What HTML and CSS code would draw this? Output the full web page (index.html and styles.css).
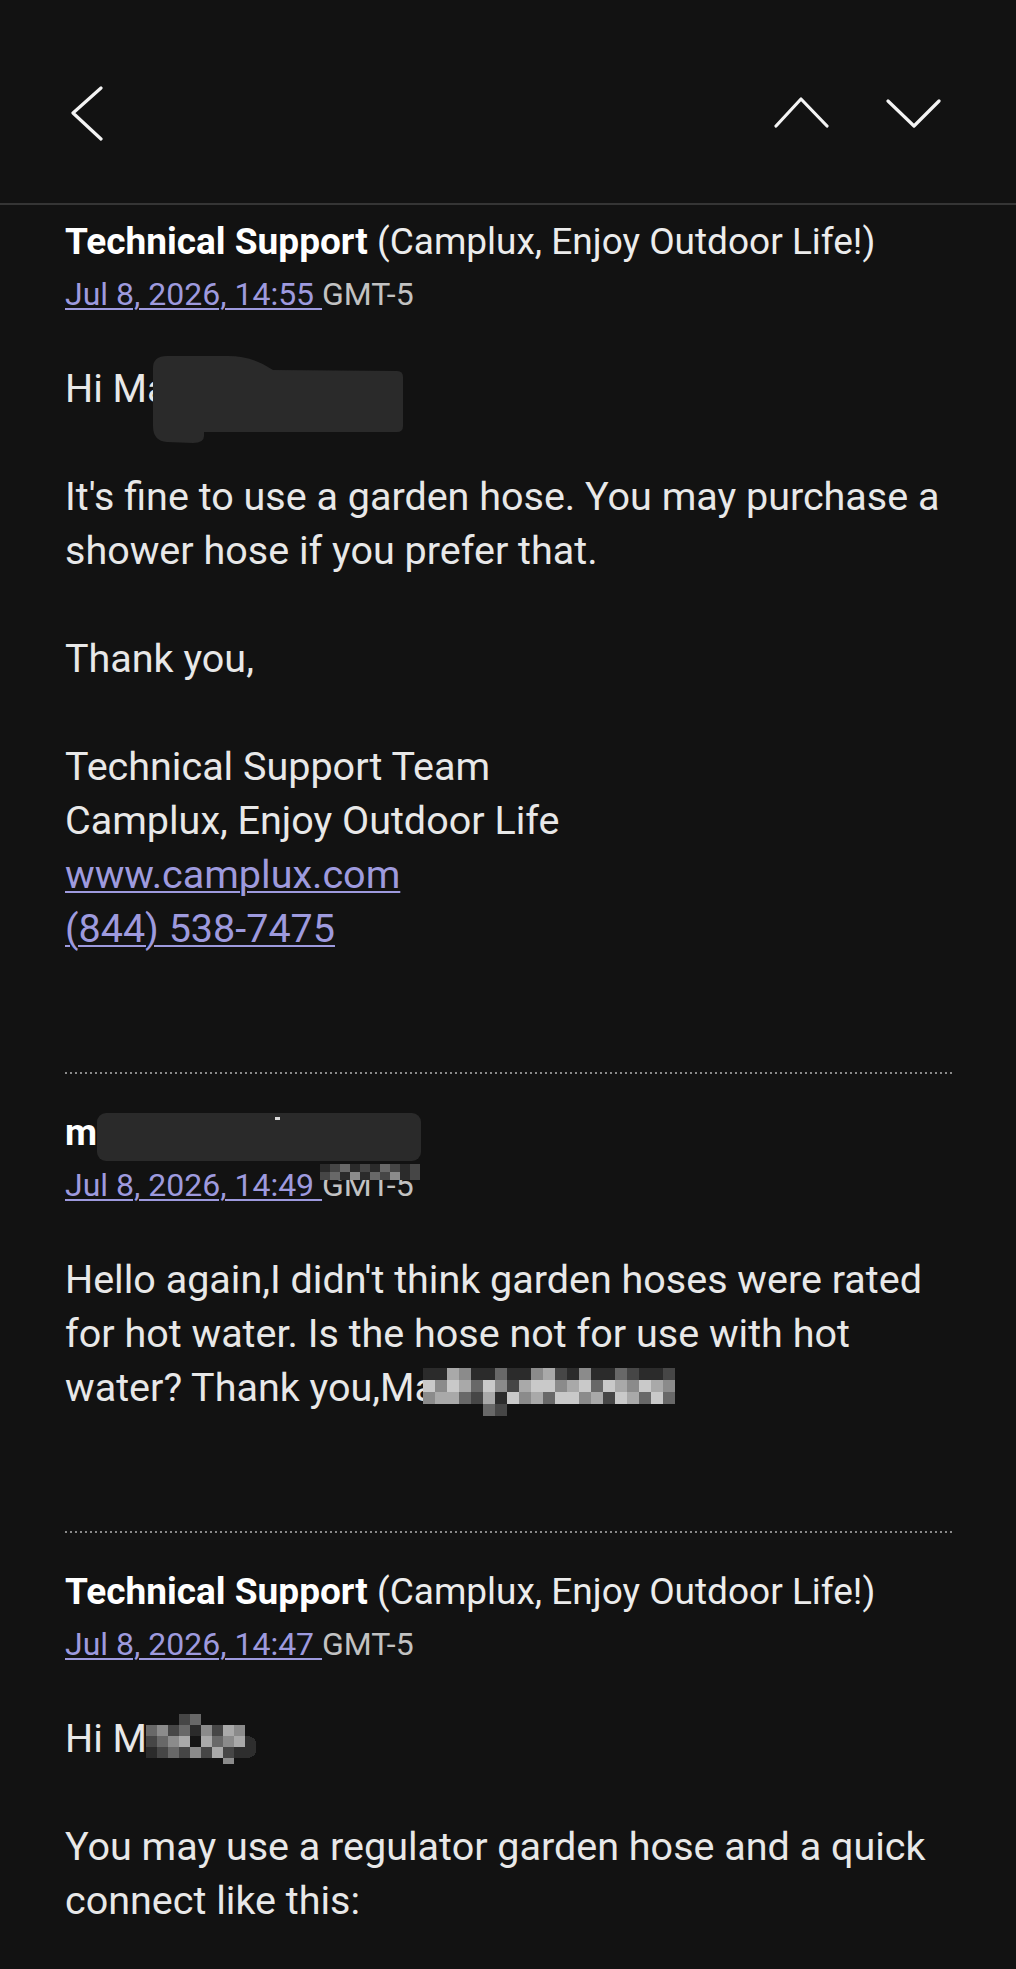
FILE: index.html
```html
<!DOCTYPE html>
<html lang="en">
<head>
  <meta charset="UTF-8" />
  <meta name="viewport" content="width=device-width, initial-scale=1.0"/>
  <title>Technical Support - Camplux</title>
  <link rel="stylesheet" href="styles.css">
</head>
<body>
  <div class="topbar">
    <button class="icon-btn">
      <svg width="32" height="56" viewBox="0 0 32 56"><path d="M30 3 L2 28 L30 54"/></svg>
    </button>
    <div class="nav">
      <button class="icon-btn">
        <svg width="56" height="32" viewBox="0 0 56 32"><path d="M3 29 L28 2 L54 29"/></svg>
      </button>
      <button class="icon-btn">
        <svg width="56" height="32" viewBox="0 0 56 32"><path d="M3 4 L29 29 L54 4"/></svg>
      </button>
    </div>
  </div>

  <div class="thread">
    <div class="message">
      <div class="sender"><strong>Technical Support</strong> (Camplux, Enjoy Outdoor Life!)</div>
      <div class="date"><a href="#">Jul 8, 2026, 14:55 </a>GMT-5</div>
      <div class="body">
        <p>Hi Ma<svg class="blot-a" width="250" height="88" viewBox="0 0 250 88"><path d="M0 12 Q0 0 14 0 L75 0 Q100 0 120 14 L244 15 Q250 15 250 21 L250 70 Q250 76 244 76 L51 76 L51 80 Q51 87 40 87 L14 86 Q0 85 0 70 Z"/></svg></p>
        <p>It's fine to use a garden hose. You may purchase a shower hose if you prefer that.</p>
        <p>Thank you,</p>
        <p>Technical Support Team<br>Camplux, Enjoy Outdoor Life<br><a href="#">www.camplux.com</a><br><a href="#">(844) 538-7475</a></p>
      </div>
    </div>

    <div class="divider"></div>

    <div class="message">
      <div class="sender"><strong>m<svg class="blot-b" width="324" height="48" viewBox="0 0 324 48"><rect x="0" y="0" width="324" height="48" rx="9"/><rect class="tick" x="178" y="4" width="5" height="3"/></svg></strong></div>
      <div class="date masked"><a href="#">Jul 8, 2026, 14:49 </a>GMT-5
        <svg class="gmt-mask" width="100" height="16" viewBox="0 0 100 16" shape-rendering="crispEdges">
          <rect x="0" y="0" width="100" height="8" fill="#2b2b2b"/>
          <rect x="10" y="0" width="10" height="8" fill="#464646"/>
          <rect x="20" y="0" width="10" height="8" fill="#686868"/>
          <rect x="40" y="0" width="10" height="8" fill="#464646"/>
          <rect x="60" y="0" width="10" height="8" fill="#686868"/>
          <rect x="70" y="0" width="10" height="8" fill="#464646"/>
          <rect x="90" y="0" width="10" height="8" fill="#464646"/>
          <rect x="0" y="8" width="100" height="8" fill="#464646"/>
          <rect x="10" y="8" width="10" height="8" fill="#686868"/>
          <rect x="20" y="8" width="10" height="8" fill="#2b2b2b"/>
          <rect x="30" y="8" width="10" height="8" fill="#8b8b8b"/>
          <rect x="40" y="8" width="10" height="8" fill="#2b2b2b"/>
          <rect x="50" y="8" width="10" height="8" fill="#686868"/>
          <rect x="70" y="8" width="10" height="8" fill="#8b8b8b"/>
          <rect x="80" y="8" width="10" height="8" fill="#2b2b2b"/>
        </svg>
      </div>
      <div class="body">
        <p>Hello again,I didn't think garden hoses were rated for hot water. Is the hose not for use with hot water? Thank you,Ma<svg class="mosaic-a" width="252" height="48" viewBox="0 0 252 48" shape-rendering="crispEdges">
          <rect x="0" y="0" width="252" height="12" fill="#2b2b2b"/>
          <rect x="24" y="0" width="12" height="12" fill="#a9a9a9"/>
          <rect x="36" y="0" width="12" height="12" fill="#8b8b8b"/>
          <rect x="72" y="0" width="12" height="12" fill="#686868"/>
          <rect x="108" y="0" width="12" height="12" fill="#8b8b8b"/>
          <rect x="120" y="0" width="12" height="12" fill="#a9a9a9"/>
          <rect x="132" y="0" width="12" height="12" fill="#464646"/>
          <rect x="156" y="0" width="12" height="12" fill="#8b8b8b"/>
          <rect x="192" y="0" width="12" height="12" fill="#686868"/>
          <rect x="204" y="0" width="12" height="12" fill="#464646"/>
          <rect x="240" y="0" width="12" height="12" fill="#464646"/>
          <rect x="0" y="12" width="252" height="12" fill="#c9c9c9"/>
          <rect x="12" y="12" width="12" height="12" fill="#8b8b8b"/>
          <rect x="36" y="12" width="12" height="12" fill="#a9a9a9"/>
          <rect x="48" y="12" width="12" height="12" fill="#686868"/>
          <rect x="72" y="12" width="12" height="12" fill="#8b8b8b"/>
          <rect x="84" y="12" width="12" height="12" fill="#464646"/>
          <rect x="96" y="12" width="12" height="12" fill="#a9a9a9"/>
          <rect x="132" y="12" width="12" height="12" fill="#8b8b8b"/>
          <rect x="144" y="12" width="12" height="12" fill="#a9a9a9"/>
          <rect x="168" y="12" width="12" height="12" fill="#686868"/>
          <rect x="192" y="12" width="12" height="12" fill="#a9a9a9"/>
          <rect x="204" y="12" width="12" height="12" fill="#8b8b8b"/>
          <rect x="228" y="12" width="12" height="12" fill="#a9a9a9"/>
          <rect x="240" y="12" width="12" height="12" fill="#8b8b8b"/>
          <rect x="0" y="24" width="252" height="12" fill="#a9a9a9"/>
          <rect x="0" y="24" width="12" height="12" fill="#8b8b8b"/>
          <rect x="36" y="24" width="12" height="12" fill="#686868"/>
          <rect x="48" y="24" width="12" height="12" fill="#464646"/>
          <rect x="72" y="24" width="12" height="12" fill="#2b2b2b"/>
          <rect x="84" y="24" width="12" height="12" fill="#c9c9c9"/>
          <rect x="96" y="24" width="12" height="12" fill="#8b8b8b"/>
          <rect x="120" y="24" width="12" height="12" fill="#686868"/>
          <rect x="132" y="24" width="24" height="12" fill="#c9c9c9"/>
          <rect x="156" y="24" width="12" height="12" fill="#8b8b8b"/>
          <rect x="180" y="24" width="12" height="12" fill="#464646"/>
          <rect x="192" y="24" width="12" height="12" fill="#c9c9c9"/>
          <rect x="216" y="24" width="12" height="12" fill="#686868"/>
          <rect x="228" y="24" width="12" height="12" fill="#c9c9c9"/>
          <rect x="240" y="24" width="12" height="12" fill="#686868"/>
          <rect x="60" y="36" width="12" height="12" fill="#686868"/>
          <rect x="72" y="36" width="12" height="12" fill="#464646"/>
        </svg></p>
      </div>
    </div>

    <div class="divider"></div>

    <div class="message">
      <div class="sender"><strong>Technical Support</strong> (Camplux, Enjoy Outdoor Life!)</div>
      <div class="date"><a href="#">Jul 8, 2026, 14:47 </a>GMT-5</div>
      <div class="body">
        <p>Hi M<svg class="mosaic-b" width="110" height="50" viewBox="0 0 110 50" shape-rendering="crispEdges">
          <path d="M0 22 H100 Q110 22 110 30 V36 Q110 44 100 44 H0 Z" fill="#2e2e2e"/>
          <rect x="33" y="0" width="11" height="11" fill="#464646"/>
          <rect x="44" y="0" width="11" height="11" fill="#686868"/>
          <rect x="0" y="11" width="11" height="11" fill="#686868"/>
          <rect x="11" y="11" width="11" height="11" fill="#8b8b8b"/>
          <rect x="22" y="11" width="11" height="11" fill="#464646"/>
          <rect x="33" y="11" width="11" height="11" fill="#686868"/>
          <rect x="44" y="11" width="11" height="11" fill="#2b2b2b"/>
          <rect x="55" y="11" width="11" height="11" fill="#8b8b8b"/>
          <rect x="66" y="11" width="11" height="11" fill="#464646"/>
          <rect x="77" y="11" width="11" height="11" fill="#a9a9a9"/>
          <rect x="88" y="11" width="11" height="11" fill="#8b8b8b"/>
          <rect x="0" y="22" width="11" height="11" fill="#464646"/>
          <rect x="11" y="22" width="11" height="11" fill="#686868"/>
          <rect x="22" y="22" width="11" height="11" fill="#8b8b8b"/>
          <rect x="33" y="22" width="11" height="11" fill="#a9a9a9"/>
          <rect x="44" y="22" width="11" height="11" fill="#151515"/>
          <rect x="55" y="22" width="11" height="11" fill="#a9a9a9"/>
          <rect x="66" y="22" width="11" height="11" fill="#686868"/>
          <rect x="77" y="22" width="11" height="11" fill="#8b8b8b"/>
          <rect x="88" y="22" width="11" height="11" fill="#a9a9a9"/>
          <rect x="0" y="33" width="11" height="11" fill="#2b2b2b"/>
          <rect x="11" y="33" width="11" height="11" fill="#464646"/>
          <rect x="22" y="33" width="11" height="11" fill="#686868"/>
          <rect x="33" y="33" width="11" height="11" fill="#464646"/>
          <rect x="44" y="33" width="11" height="11" fill="#8b8b8b"/>
          <rect x="55" y="33" width="11" height="11" fill="#464646"/>
          <rect x="66" y="33" width="11" height="11" fill="#a9a9a9"/>
          <rect x="77" y="33" width="11" height="11" fill="#464646"/>
          <rect x="77" y="44" width="11" height="6" fill="#8b8b8b"/>
        </svg></p>
        <p>You may use a regulator garden hose and a quick connect like this:</p>
      </div>
    </div>
  </div>
</body>
</html>
```

FILE: styles.css
```css
* {
  box-sizing: border-box;
}

html,
body {
  background: #121212;
}

body {
  margin: 0;
  font-family: Roboto, "Noto Sans", sans-serif;
  color: #e8e8e8;
}

/* top bar */
.topbar {
  height: 205px;
  display: flex;
  justify-content: space-between;
  align-items: flex-start;
  padding: 85px 75px 0 71px;
  border-bottom: 2px solid #353535;
}

.icon-btn {
  display: block;
  background: none;
  border: none;
  padding: 0;
  margin: 0;
  cursor: pointer;
}

.icon-btn svg {
  display: block;
  fill: none;
  stroke: #f4f4f4;
  stroke-width: 3.2;
  stroke-linecap: round;
  stroke-linejoin: round;
}

.nav {
  display: flex;
  gap: 56px;
  margin-top: 12px;
}

/* mail thread */
.thread {
  padding: 12px 63px 40px 65px;
}

.sender {
  font-size: 37px;
  line-height: 50px;
  color: #ececec;
  white-space: nowrap;
}

.sender strong {
  color: #ffffff;
  font-weight: 700;
}

.date {
  font-size: 32px;
  line-height: 54px;
  color: #c2c2c2;
}

.date.masked {
  position: relative;
}

a {
  color: #9e9ade;
  text-decoration: underline;
  text-decoration-thickness: 2px;
  text-underline-offset: 3px;
}

.body {
  margin-top: 41px;
  font-size: 39.5px;
  line-height: 54px;
}

.body p {
  margin: 0 0 54px;
}

.body p:last-child {
  margin-bottom: 0;
}

.divider {
  height: 2px;
  margin: 116px 0 34px;
  background: repeating-linear-gradient(90deg, #8a8a8a 0 2px, transparent 2px 5px);
}

/* redactions */
.blot-a {
  display: inline-block;
  fill: #2a2a2a;
  margin: -20px 0 -40px -16px;
  vertical-align: -2px;
}

.blot-b {
  display: inline-block;
  fill: #2a2a2a;
  margin: 0 0 -10px 0;
  vertical-align: -6px;
}

.blot-b .tick {
  fill: #dcdcdc;
}

.gmt-mask {
  position: absolute;
  left: 255px;
  top: 6px;
}

.mosaic-a {
  display: inline-block;
  margin: 0 0 -4px -13px;
  vertical-align: -11px;
}

.mosaic-b {
  display: inline-block;
  margin-left: -1px;
  vertical-align: -12px;
}
```
